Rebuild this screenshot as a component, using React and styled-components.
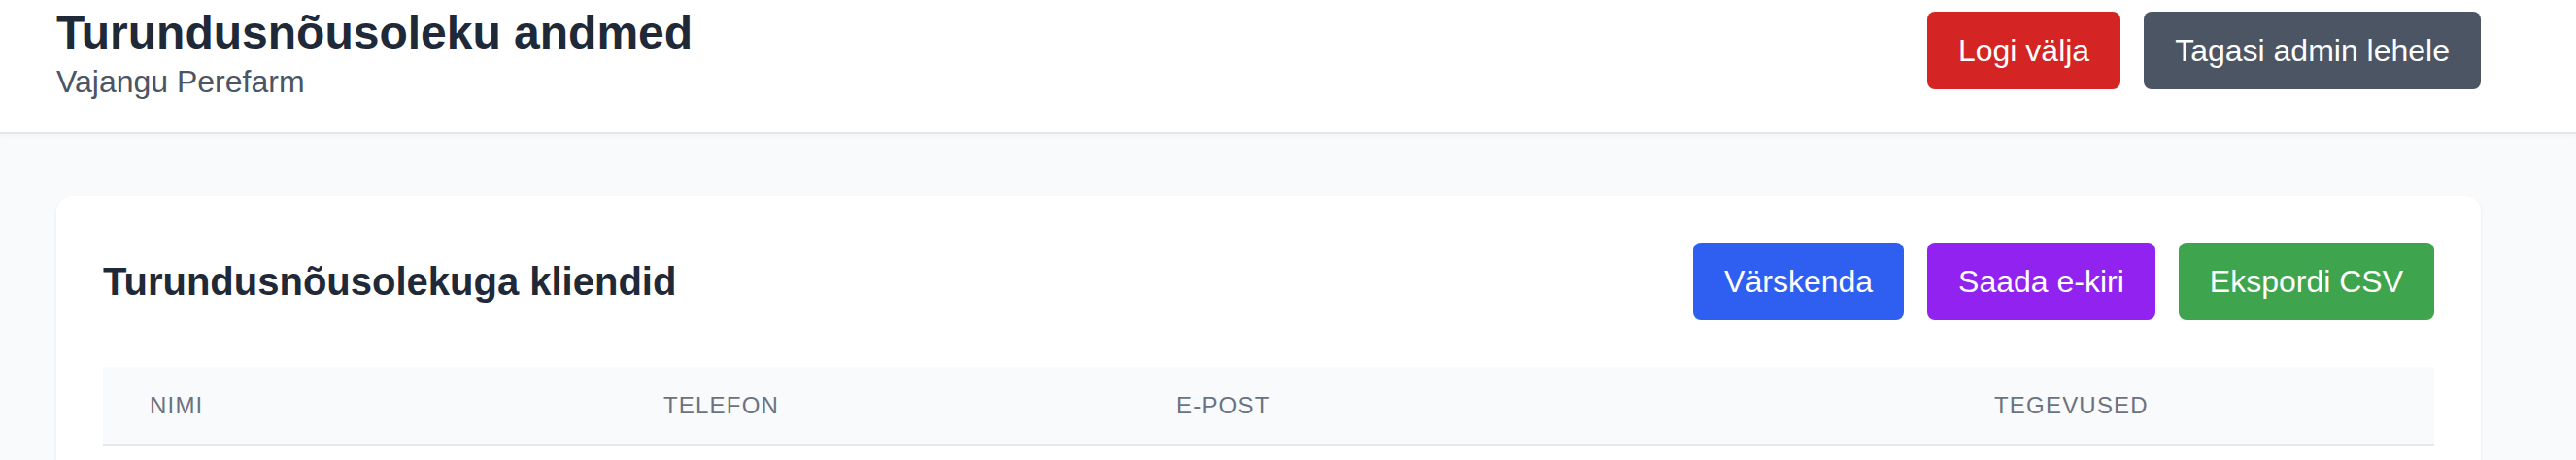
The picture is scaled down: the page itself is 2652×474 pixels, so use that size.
import React from 'react';
import styled, { createGlobalStyle } from 'styled-components';

const GlobalStyle = createGlobalStyle`
  html, body {
    margin: 0;
    padding: 0;
    background: #f9fafb;
    font-family: 'Liberation Sans', Arial, sans-serif;
  }
  * {
    box-sizing: border-box;
  }
`;

const Header = styled.header`
  background: #ffffff;
  box-shadow: 0 2px 0 #e5e7eb, 0 2px 8px rgba(0, 0, 0, 0.05);
`;

const Container = styled.div`
  width: 2496px;
  margin-left: 58px;
`;

const HeaderInner = styled(Container)`
  display: flex;
  justify-content: space-between;
  align-items: flex-start;
  padding: 12px 0 30px;
`;

const TitleBlock = styled.div`
  display: flex;
  flex-direction: column;
`;

const PageTitle = styled.h1`
  margin: 0;
  font-size: 48px;
  line-height: 44px;
  font-weight: 700;
  color: #1f2937;
`;

const Subtitle = styled.p`
  margin: 6px 0 0;
  font-size: 32px;
  line-height: 44px;
  color: #4b5563;
`;

const ButtonGroup = styled.div`
  display: flex;
  gap: 24px;
`;

const Button = styled.button`
  border: none;
  border-radius: 8px;
  padding: 16px 32px;
  font-family: inherit;
  font-size: 32px;
  line-height: 48px;
  color: #ffffff;
  background: ${(p) => p.$bg};
  cursor: pointer;
  white-space: nowrap;
`;

const Main = styled(Container)`
  padding-top: 66px;
`;

const Card = styled.section`
  background: #ffffff;
  border-radius: 16px;
  box-shadow: 0 2px 4px rgba(0, 0, 0, 0.06), 0 1px 2px rgba(0, 0, 0, 0.04);
  padding: 48px 48px 60px;
`;

const CardHeader = styled.div`
  display: flex;
  justify-content: space-between;
  align-items: center;
  margin-bottom: 48px;
`;

const CardTitle = styled.h2`
  margin: 0;
  font-size: 40px;
  line-height: 56px;
  font-weight: 700;
  color: #1f2937;
`;

const Table = styled.table`
  width: 100%;
  border-collapse: collapse;
  table-layout: fixed;
`;

const HeadRow = styled.tr`
  background: #f9fafb;
  border-bottom: 2px solid #e5e7eb;
`;

const Th = styled.th`
  padding: 24px 48px;
  text-align: left;
  font-size: 24px;
  line-height: 32px;
  font-weight: 400;
  text-transform: uppercase;
  letter-spacing: 0.05em;
  color: #6b7280;
`;

const columns = [
  { label: 'Nimi', width: 529 },
  { label: 'Telefon', width: 528 },
  { label: 'E-post', width: 842 },
  { label: 'Tegevused', width: 501 },
];

const App = () => {
  return (
    <>
      <GlobalStyle />
      <Header>
        <HeaderInner>
          <TitleBlock>
            <PageTitle>Turundusnõusoleku andmed</PageTitle>
            <Subtitle>Vajangu Perefarm</Subtitle>
          </TitleBlock>
          <ButtonGroup>
            <Button $bg='#d42424'>Logi välja</Button>
            <Button $bg='#4b5563'>Tagasi admin lehele</Button>
          </ButtonGroup>
        </HeaderInner>
      </Header>
      <Main>
        <Card>
          <CardHeader>
            <CardTitle>Turundusnõusolekuga kliendid</CardTitle>
            <ButtonGroup>
              <Button $bg='#2f5ff1'>Värskenda</Button>
              <Button $bg='#9122ef'>Saada e-kiri</Button>
              <Button $bg='#3ea44d'>Ekspordi CSV</Button>
            </ButtonGroup>
          </CardHeader>
          <Table>
            <colgroup>
              {columns.map((c) => (
                <col key={c.label} style={{ width: c.width }} />
              ))}
            </colgroup>
            <thead>
              <HeadRow>
                {columns.map((c) => (
                  <Th key={c.label}>{c.label}</Th>
                ))}
              </HeadRow>
            </thead>
            <tbody />
          </Table>
        </Card>
      </Main>
    </>
  );
};

export default App;
